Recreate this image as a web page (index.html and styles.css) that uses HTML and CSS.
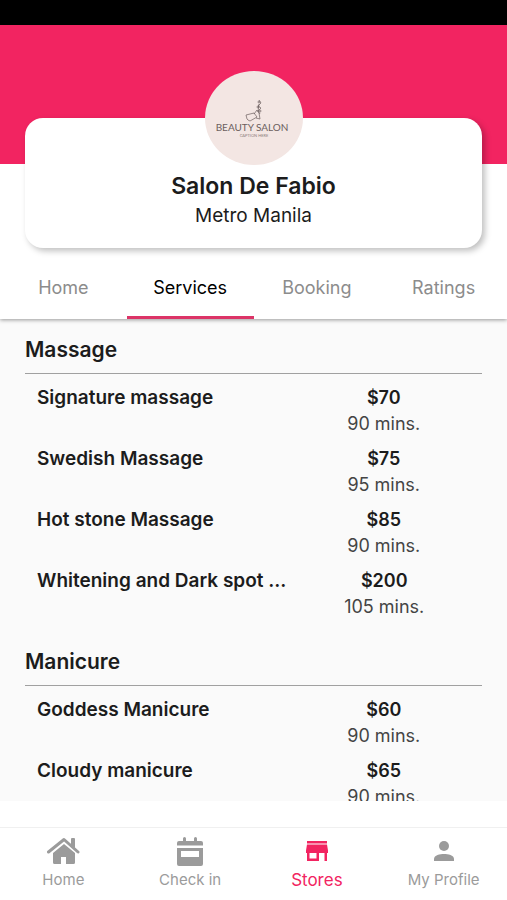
FILE: index.html
```html
<!DOCTYPE html>
<html lang="en">
<head>
    <meta charset="UTF-8">
    <meta name="viewport" content="width=device-width, initial-scale=1.0">
    <title>Salon De Fabio</title>
    <link rel="stylesheet" href="styles.css">
</head>
<body>
    <div class="status-bar"></div>
    <header class="banner"></header>

    <section class="store-card">
        <svg class="store-logo" viewBox="0 0 98 94" role="img" aria-label="Beauty Salon">
            <ellipse cx="49" cy="47" rx="49" ry="47" fill="#f3e6e3"/>
            <g fill="none" stroke="#6b5f5e" stroke-width="0.7">
                <path d="M42 48l-1-4 8-2 3 4-7 4-2-1zM49 43l3-4 2 3 1 6-4-1M53 41l1-8M54 29l2 3-3 3 3 2-3 3 2 3"/>
                <circle cx="54" cy="31" r="1"/>
                <circle cx="53" cy="36" r="1"/>
                <circle cx="55" cy="40" r="1"/>
            </g>
            <text class="logo-name" x="49" y="60" text-anchor="end">BEAUTY</text>
            <text class="logo-name" x="51" y="60">SALON</text>
            <text class="logo-caption" x="49" y="66">CAPTION HERE</text>
        </svg>
        <h1>Salon De Fabio</h1>
        <p>Metro Manila</p>
    </section>

    <nav class="tabs">
        <a href="#home">Home</a>
        <a href="#services" class="active">Services</a>
        <a href="#booking">Booking</a>
        <a href="#ratings">Ratings</a>
    </nav>

    <main class="services">
        <section>
            <h2>Massage</h2>
            <ul>
                <li>
                    <h3>Signature massage</h3>
                    <div class="price"><strong>$70</strong><span>90 mins.</span></div>
                </li>
                <li>
                    <h3>Swedish Massage</h3>
                    <div class="price"><strong>$75</strong><span>95 mins.</span></div>
                </li>
                <li>
                    <h3>Hot stone Massage</h3>
                    <div class="price"><strong>$85</strong><span>90 mins.</span></div>
                </li>
                <li>
                    <h3>Whitening and Dark spot ...</h3>
                    <div class="price"><strong>$200</strong><span>105 mins.</span></div>
                </li>
            </ul>
        </section>
        <section>
            <h2>Manicure</h2>
            <ul>
                <li>
                    <h3>Goddess Manicure</h3>
                    <div class="price"><strong>$60</strong><span>90 mins.</span></div>
                </li>
                <li>
                    <h3>Cloudy manicure</h3>
                    <div class="price"><strong>$65</strong><span>90 mins.</span></div>
                </li>
            </ul>
        </section>
    </main>

    <nav class="bottom-nav">
        <a href="#home">
            <svg width="34" height="30" viewBox="0 0 34 30">
                <path d="M2.500 16L18 3.500l14 12.500" fill="none" stroke="currentColor" stroke-width="3" stroke-linecap="round" stroke-linejoin="round"/>
                <path d="M25 3q0-1 1-1h2q1 0 1 1v10l-4-3.500zM18 8l11 9v9.500q0 1.500-1.500 1.500H20v-7h-5v7H8.500Q7 28 7 26.500V17z" fill="currentColor"/>
            </svg>
            Home
        </a>
        <a href="#check-in">
            <svg width="34" height="30" viewBox="0 0 34 30">
                <path d="M4 9.500V7q0-2 2-2h4V2.500Q10 1 11.500 1T13 2.500V5h8V2.500Q21 1 22.500 1T24 2.500V5h4q2 0 2 2v2.500zM4 12h26v16q0 2-2 2H6q-2 0-2-2zm4 3v6h18v-6z" fill="currentColor" fill-rule="evenodd"/>
            </svg>
            Check in
        </a>
        <a href="#stores" class="active">
            <svg width="34" height="30" viewBox="0 0 34 30">
                <path d="M7 5h20v2.500H7zM7 8.500h20l1 6V17h-1v8h-2.500v-8H19v8H7v-8H6v-2.500zM9.500 17v5.500h7V17z" fill="currentColor" fill-rule="evenodd"/>
            </svg>
            Stores
        </a>
        <a href="#profile">
            <svg width="34" height="30" viewBox="0 0 34 30">
                <circle cx="17" cy="10" r="5" fill="currentColor"/>
                <path d="M7 25v-2c0-4 6-5 10-5s10 1 10 5v2z" fill="currentColor"/>
            </svg>
            My Profile
        </a>
    </nav>
</body>
</html>
```
FILE: styles.css
```css
:root {
    --pink: #f22461;
    --text: #1c1c1c;
    --muted: #8c8c8c;
}

* {
    box-sizing: border-box;
}

body {
    display: flex;
    flex-direction: column;
    height: 100vh;
    margin: 0;
    font-family: Inter, "Open Sans", sans-serif;
    font-size: 18px;
    line-height: 26px;
    color: var(--text);
    background-color: #fff;
}

h1, h2, h3, p, ul {
    margin: 0;
    padding: 0;
}

a {
    text-decoration: none;
}

.status-bar {
    flex: none;
    height: 25px;
    background-color: #000;
}

.banner {
    flex: none;
    height: 139px;
    background-color: var(--pink);
}

/* Store card */
.store-card {
    flex: none;
    display: flex;
    flex-direction: column;
    align-items: center;
    margin: -46px 25px 0;
    padding-bottom: 18px;
    border-radius: 18px;
    background-color: #fff;
    box-shadow: 3px 3px 6px rgba(0, 0, 0, 0.25);
    z-index: 2;
}

.store-logo {
    width: 98px;
    height: 94px;
    margin-top: -47px;
}

.logo-name {
    font-family: Lato, sans-serif;
    font-size: 10px;
    fill: #6b5f5e;
}

.logo-caption {
    font-family: Lato, sans-serif;
    font-size: 4px;
    text-anchor: middle;
    fill: #8d807e;
}

.store-card h1 {
    margin-top: 5px;
    font-size: 23px;
    font-weight: 600;
    line-height: 32px;
}

.store-card p {
    font-size: 19px;
    line-height: 28px;
}

/* Tabs */
.tabs {
    flex: none;
    display: flex;
    height: 71px;
    z-index: 1;
    background-color: #fff;
    box-shadow: 0 1px 4px rgba(0, 0, 0, 0.4);
    clip-path: inset(0 0 -8px);
}

.tabs a {
    flex: 1;
    padding-top: 27px;
    text-align: center;
    color: var(--muted);
}

.tabs .active {
    color: #000;
    border-bottom: 3px solid #dc3467;
}

/* Service list */
.services {
    flex: 1;
    min-height: 0;
    overflow: hidden;
    padding: 16px 25px 0;
    background-color: #fafafa;
}

.services section {
    margin-bottom: 27px;
}

.services h2 {
    padding-bottom: 8px;
    border-bottom: 1px solid #a0a0a0;
    font-size: 21px;
    font-weight: 600;
    line-height: 30px;
}

.services ul {
    display: flex;
    flex-direction: column;
    gap: 9px;
    padding-top: 11px;
    list-style: none;
}

.services li {
    display: grid;
    grid-template-columns: 57fr 43fr;
}

.services h3 {
    padding-left: 12px;
    font-size: 19px;
    font-weight: 600;
    line-height: 26px;
    white-space: nowrap;
}

.price {
    display: flex;
    flex-direction: column;
    text-align: center;
}

.price strong {
    font-weight: 600;
}

.price span {
    color: #444;
}

/* Bottom navigation */
.bottom-nav {
    flex: none;
    display: flex;
    height: 73px;
    margin-top: 26px;
    border-top: 1px solid #f0f0f0;
}

.bottom-nav a {
    flex: 1;
    display: flex;
    flex-direction: column;
    align-items: center;
    padding-top: 8px;
    font-size: 15px;
    line-height: 28px;
    color: #9b9b9b;
}

.bottom-nav .active {
    font-size: 17px;
    color: var(--pink);
}
```
